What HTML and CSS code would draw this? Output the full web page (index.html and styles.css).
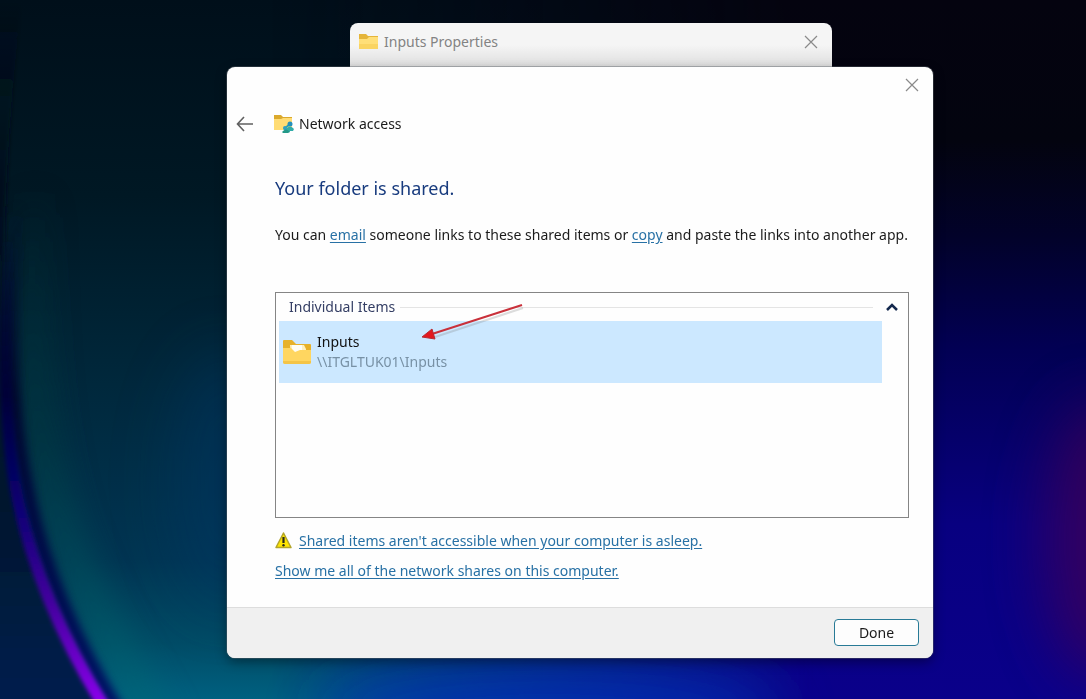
FILE: index.html
```html
<!DOCTYPE html>
<html lang="en">
<head>
<meta charset="utf-8">
<meta name="viewport" content="width=device-width, initial-scale=1">
<title>Network access</title>
<link rel="stylesheet" href="styles.css">
</head>
<body class="desktop">
<svg class="wallpaper" viewBox="0 0 1086 699" preserveAspectRatio="none" aria-hidden="true">
  <defs>
    <linearGradient id="base" x1="0" y1="0" x2="0" y2="1">
      <stop offset="0" stop-color="#000f1a"/><stop offset=".28" stop-color="#001824"/><stop offset=".55" stop-color="#00283c"/><stop offset=".8" stop-color="#003552"/><stop offset=".92" stop-color="#004c66"/><stop offset="1" stop-color="#006080"/>
    </linearGradient>
    <linearGradient id="right" x1="0" y1="0" x2="0" y2="1">
      <stop offset="0" stop-color="#04030f"/><stop offset=".2" stop-color="#03040f"/><stop offset=".34" stop-color="#02022a"/><stop offset=".5" stop-color="#020054"/><stop offset=".75" stop-color="#080080"/><stop offset="1" stop-color="#0a008a"/>
    </linearGradient>
    <linearGradient id="fade" x1="0" y1="0" x2="1" y2="0">
      <stop offset=".25" stop-color="#000"/><stop offset=".75" stop-color="#fff"/>
    </linearGradient>
    <mask id="rightMask"><rect width="1086" height="699" fill="url(#fade)"/></mask>
    <linearGradient id="outer" x1="0" y1="0" x2="0" y2="1">
      <stop offset="0" stop-color="#000f1a" stop-opacity="0"/><stop offset=".25" stop-color="#00101e"/><stop offset=".7" stop-color="#001830"/><stop offset="1" stop-color="#001f55"/>
    </linearGradient>
    <linearGradient id="arc" gradientUnits="userSpaceOnUse" x1="0" y1="230" x2="0" y2="699">
      <stop offset="0" stop-color="#000030" stop-opacity="0"/><stop offset=".35" stop-color="#010038"/><stop offset=".58" stop-color="#080070"/><stop offset=".8" stop-color="#4500a0"/><stop offset="1" stop-color="#8800e8"/>
    </linearGradient>
    <linearGradient id="shade" gradientUnits="userSpaceOnUse" x1="0" y1="200" x2="0" y2="699">
      <stop offset="0" stop-color="#00002c" stop-opacity="0"/><stop offset=".4" stop-color="#00002c"/><stop offset="1" stop-color="#000060"/>
    </linearGradient>
    <linearGradient id="teal" gradientUnits="userSpaceOnUse" x1="0" y1="180" x2="0" y2="699">
      <stop offset="0" stop-color="#003a3a" stop-opacity="0"/><stop offset=".5" stop-color="#003a42"/><stop offset="1" stop-color="#006878"/>
    </linearGradient>
    <filter id="soft" filterUnits="userSpaceOnUse" x="-200" y="0" width="1500" height="900"><feGaussianBlur stdDeviation="30"/></filter>
    <filter id="wide" filterUnits="userSpaceOnUse" x="-200" y="0" width="1500" height="900"><feGaussianBlur stdDeviation="14"/></filter>
    <filter id="edge" filterUnits="userSpaceOnUse" x="-50" y="0" width="300" height="800"><feGaussianBlur stdDeviation="4"/></filter>
    <filter id="slight" filterUnits="userSpaceOnUse" x="-50" y="-50" width="300" height="900"><feGaussianBlur stdDeviation="2"/></filter>
  </defs>
  <rect width="1086" height="699" fill="url(#base)"/>
  <ellipse cx="225" cy="480" rx="55" ry="130" fill="#00386a" opacity=".4" filter="url(#soft)"/>
  <path d="M36 180Q20 400 62 530Q90 610 160 730" fill="none" stroke="url(#teal)" stroke-width="42" opacity=".6" filter="url(#wide)"/>
  <rect width="1086" height="699" fill="url(#right)" mask="url(#rightMask)"/>
  <ellipse cx="550" cy="715" rx="230" ry="45" fill="#002fc0" opacity=".7" filter="url(#soft)"/>
  <ellipse cx="1100" cy="540" rx="55" ry="140" fill="#480050" opacity=".65" filter="url(#soft)"/>
  <path d="M-20 0H22Q-5 220 7 440Q20 570 98 699V740H-20Z" fill="url(#outer)" filter="url(#slight)"/>
  <path d="M18 200Q2 380 26 485Q46 595 120 715" fill="none" stroke="url(#shade)" stroke-width="14" opacity=".85" filter="url(#edge)"/>
  <path d="M10 200Q-2 380 15 485Q35 595 106 710" fill="none" stroke="url(#arc)" stroke-width="12" filter="url(#slight)"/>
</svg>

<main class="stage">
  <section class="properties" aria-label="Inputs Properties">
    <svg class="folder-small" viewBox="0 0 20 18" aria-hidden="true"><path d="M0 1h7l2 2h10v13H0z" fill="#e5b53a"/><path d="M0 6h8l2-2h9v12H0z" fill="#ffdf78"/><path d="M0 11h19v5H0z" fill="#f8cf58" opacity=".7"/></svg>
    <span class="properties-title">Inputs Properties</span>
    <button class="close close-back" aria-label="Close properties"><svg viewBox="0 0 14 14"><path d="M1 1l12 12M13 1L1 13"/></svg></button>
  </section>

  <section class="dialog" role="dialog" aria-label="Network access">
    <div class="titlebar">
      <button class="close" aria-label="Close"><svg viewBox="0 0 14 14"><path d="M1 1l12 12M13 1L1 13"/></svg></button>
    </div>
    <header class="heading">
      <button class="back" aria-label="Back"><svg viewBox="0 0 18 16"><path d="M17 8H2M8 1L1.500 8L8 15"/></svg></button>
      <svg class="share-icon" viewBox="0 0 20 18" aria-hidden="true"><path d="M0 0h7l2 2h9v13H0z" fill="#dba92c"/><path d="M0 4h7l2-1h9v12H0z" fill="#ffdc74"/><path d="M10 14l6-5M10 14l6 2" stroke="#2ba6ad" stroke-width="2"/><circle cx="16" cy="9" r="2.500" fill="#238fbd"/><path d="M12 14q4-5 8 0l-1 2h-6z" fill="#31aca8"/><circle cx="11" cy="13" r="2" fill="#319fc1"/><path d="M8 17q4-5 8 0l-2 1H9z" fill="#239988"/></svg>
      <span class="heading-text">Network access</span>
    </header>
    <div class="content">
      <h1 class="status">Your folder is shared.</h1>
      <p class="hint">You can <a href="#email">email</a> someone links to these shared items or <a href="#copy">copy</a> and paste the links into another app.</p>
      <div class="items">
        <div class="group">
          <span class="group-title">Individual Items</span>
          <span class="group-rule"></span>
          <button class="collapse" aria-label="Collapse group"><svg viewBox="0 0 12 8"><path d="M1 7l5-5 5 5"/></svg></button>
        </div>
        <div class="item">
          <svg class="folder-large" viewBox="0 0 28 24" aria-hidden="true"><path d="M0 1q0-1 1-1h8l4 4h14q1 0 1 1v18H0z" fill="#e7b128"/><path d="M7 5h14l2 4v8H8z" fill="#fff0bd"/><path d="M9 5h10v7H9z" fill="#fffdf2"/><path d="M0 8h8l4 4 5-2h11v12q0 2-2 2H2q-2 0-2-2z" fill="#ffd660"/><path d="M0 21h28v1q0 2-2 2H2q-2 0-2-2z" fill="#f4c447"/></svg>
          <div class="item-text">
            <span class="item-name">Inputs</span>
            <span class="item-path">\\ITGLTUK01\Inputs</span>
          </div>
        </div>
        <svg class="pointer" viewBox="0 0 106 40" aria-hidden="true"><path d="M15 34L103 5" stroke="#777" stroke-width="2" opacity=".25"/><path d="M12 31L102 2" stroke="#c9303a" stroke-width="2"/><path d="M2 34L12 26 15 36z" fill="#e3181f" stroke="#b62b33"/></svg>
      </div>
      <div class="warning">
        <svg class="warning-icon" viewBox="0 0 18 18" aria-hidden="true"><path d="M8.500 1L16 15.500H1z" fill="#ffe500" stroke="#b3a52a" stroke-linejoin="round" stroke-width="1.500"/><path d="M8.500 5v6" stroke="#282a1d" stroke-width="2.200"/><circle cx="8.500" cy="13.300" r="1.200" fill="#282a1d"/></svg>
        <a href="#asleep">Shared items aren't accessible when your computer is asleep.</a>
      </div>
      <a class="shares" href="#shares">Show me all of the network shares on this computer.</a>
    </div>
    <footer class="actions"><button class="done">Done</button></footer>
  </section>
</main>
</body>
</html>
```
FILE: styles.css
```css
* { box-sizing: border-box; }
.desktop {
  margin: 0;
  min-height: 100vh;
  background: #000c17;
  color: #1b1b1b;
  font: 14px/20px "Noto Sans", "Open Sans", sans-serif;
}
button { padding: 0; border: 0; background: none; font: inherit; color: inherit; }
svg { display: block; flex: none; }
.wallpaper { position: fixed; inset: 0; width: 100%; height: 100%; z-index: -1; }
.stage { padding: 23px 153px 41px 227px; }
.properties {
  display: flex;
  align-items: center;
  height: 44px;
  margin: 0 101px 0 123px;
  padding: 0 14px 7px 9px;
  border-radius: 8px 8px 0 0;
  background: linear-gradient(#f5f5f5 50%, #dedede);
  color: #838383;
}
.folder-small { width: 20px; height: 18px; margin-right: 5px; }
.properties-title { flex: 1; }
.close svg { width: 14px; height: 14px; fill: none; stroke: #8a8a8a; stroke-width: 1.2; }
.dialog {
  overflow: hidden;
  border-radius: 8px;
  background: #fefefe;
  box-shadow: 0 0 0 1px #5a626a66, 0 4px 12px #0006;
}
.titlebar { display: flex; justify-content: flex-end; padding: 11px 14px 0; }
.heading { display: flex; align-items: center; margin-top: 20px; padding-left: 9px; height: 24px; }
.back { margin-right: 20px; }
.back svg { width: 18px; height: 16px; fill: none; stroke: #606060; stroke-width: 1.6; }
.share-icon { width: 20px; height: 18px; margin-right: 5px; }
.content { padding: 38px 24px 26px 48px; }
.status { margin: 0; font-size: 18px; line-height: 28px; font-weight: 400; color: #183b7e; }
.hint { margin: 23px 0 47px; }
a { color: #2871a5; text-underline-offset: 2px; }
.items { position: relative; height: 226px; border: 1px solid #858585; }
.group { display: flex; align-items: center; height: 28px; padding: 0 10px 0 13px; color: #343e64; }
.group-rule { flex: 1; height: 1px; margin: 0 13px 0 5px; background: #e4e4e4; }
.collapse svg { width: 12px; height: 8px; fill: none; stroke: #14284d; stroke-width: 2.5; }
.item { display: flex; align-items: center; height: 62px; margin: 0 26px 0 3px; padding-left: 4px; background: #cce8ff; }
.folder-large { width: 28px; height: 24px; margin-right: 6px; }
.item-text { display: flex; flex-direction: column; color: #111; }
.item-path { color: #7891a5; }
.pointer { position: absolute; left: 144px; top: 10px; width: 106px; height: 40px; }
.warning { display: flex; align-items: center; margin-top: 13px; }
.warning-icon { width: 18px; height: 18px; margin-right: 6px; }
.shares { display: block; width: fit-content; margin-top: 10px; }
.actions { display: flex; justify-content: flex-end; padding: 11px 14px 12px; border-top: 1px solid #ddd; background: #f0f0f0; }
.done { width: 85px; height: 27px; border: 1px solid #287a96; border-radius: 4px; background: #fdfdfd; }
```
